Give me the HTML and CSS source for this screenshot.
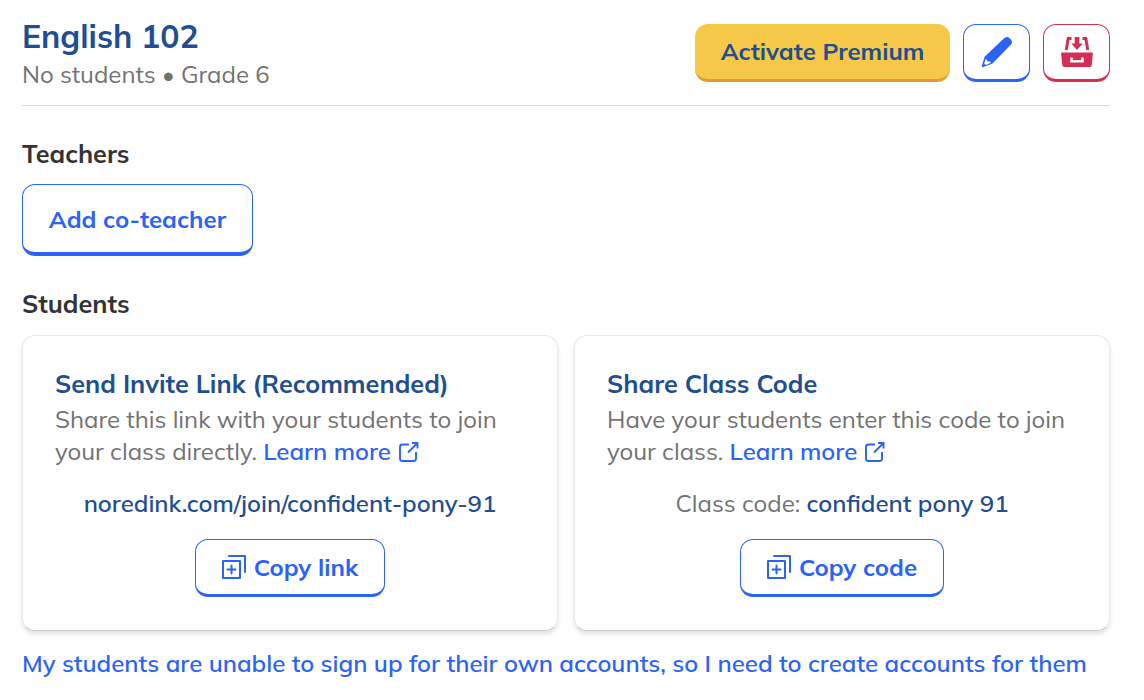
FILE: index.html
```
<!DOCTYPE html>
<html lang="en">
<head>
    <meta charset="utf-8">
    <title>English 102</title>
    <link rel="stylesheet" href="styles.css">
</head>
<body>
    <header class="class-header">
        <div>
            <h1 class="title">English 102</h1>
            <p class="subtitle">No students • Grade 6</p>
        </div>
        <div class="actions">
            <button class="btn premium">Activate Premium</button>
            <button class="btn icon-btn" aria-label="Edit class">
                <svg width="32" height="32" viewBox="0 0 32 32">
                    <path fill="currentColor" d="M23.7 1.800q2.300-1.800 4.800.4l1.300 1.300q2.200 2.500.4 4.700L11.500 27.500 1.500 31.200l-.8-.8L3.600 20.800z"/>
                    <path fill="#fff" d="M5 22.500l1.200 2.700 2.800.4 1 1.200-5.200 2.200-1.600-1.600z"/>
                </svg>
            </button>
            <button class="btn icon-btn danger" aria-label="Archive class">
                <svg width="32" height="32" viewBox="0 0 32 32">
                    <path fill="none" stroke="currentColor" stroke-width="3" d="M10.500 2.500H7.200L5.200 14M21.500 2.500h3.300L26.800 14"/>
                    <path fill="currentColor" d="M13.700 1h4.600v6.400h3.400L16 14l-5.700-6.600h3.400z"/>
                    <path fill="currentColor" fill-rule="evenodd" d="M1.200 16.500h29.600q1.200 0 1.100 1.200l-1.200 11.500q-.2 1.800-2 1.800H3.300q-1.800 0-2-1.800L.1 17.700q-.1-1.200 1.100-1.200zM9.300 21.500v5h13.400v-5h-2.500v2.400h-8.400v-2.400z"/>
                </svg>
            </button>
        </div>
    </header>

    <h2 class="section-title">Teachers</h2>
    <button class="btn large">Add co-teacher</button>

    <h2 class="section-title">Students</h2>
    <div class="cards">
        <section class="card">
            <h3 class="card-title">Send Invite Link (Recommended)</h3>
            <p class="description">Share this link with your students to join<br>your class directly. <a href="#">Learn more</a>
                <svg class="external" width="22" height="22" viewBox="0 0 22 22"><path d="M11 3.500H4.500Q2 3.500 2 6v11.500Q2 20 4.500 20H15.500Q18 20 18 17.500V11M14 2h5.500v5.500M19.500 2L10 11.500"/></svg>
            </p>
            <p class="code"><strong>noredink.com/join/confident-pony-91</strong></p>
            <button class="btn copy">
                <svg class="copy-icon" width="24" height="24" viewBox="0 0 24 24"><path d="M1 6h17v17H1zM7 1h16v16M9.500 10.500v8M5.500 14.500h8"/></svg>
                <span>Copy link</span>
            </button>
        </section>
        <section class="card">
            <h3 class="card-title">Share Class Code</h3>
            <p class="description">Have your students enter this code to join<br>your class. <a href="#">Learn more</a>
                <svg class="external" width="22" height="22" viewBox="0 0 22 22"><path d="M11 3.500H4.500Q2 3.500 2 6v11.500Q2 20 4.500 20H15.500Q18 20 18 17.500V11M14 2h5.500v5.500M19.500 2L10 11.500"/></svg>
            </p>
            <p class="code">Class code: <strong>confident pony 91</strong></p>
            <button class="btn copy">
                <svg class="copy-icon" width="24" height="24" viewBox="0 0 24 24"><path d="M1 6h17v17H1zM7 1h16v16M9.500 10.500v8M5.500 14.500h8"/></svg>
                <span>Copy code</span>
            </button>
        </section>
    </div>
    <a class="no-signup" href="#">My students are unable to sign up for their own accounts, so I need to create accounts for them</a>
</body>
</html>
```
FILE: styles.css
```
* {
    box-sizing: border-box;
}

body {
    margin: 0;
    padding: 16px 34px 0 22px;
    height: 700px;
    overflow: hidden;
    background: #fff;
    color: #333;
    font-family: Mulish, Muli, Lato, sans-serif;
    font-size: 24px;
    line-height: 32px;
}

h1, h2, h3, p {
    margin: 0;
}

a {
    color: #2b63f6;
    font-weight: 600;
    text-decoration: none;
}

.class-header {
    display: flex;
    justify-content: space-between;
    height: 90px;
    border-bottom: 1px solid #d8dadb;
}

.title {
    padding-bottom: 2px;
    color: #1f4f90;
    font-size: 32px;
    line-height: 40px;
}

.subtitle {
    color: #727272;
}

.actions {
    display: flex;
    gap: 13px;
    padding-top: 8px;
}

.btn {
    display: flex;
    align-items: center;
    justify-content: center;
    gap: 8px;
    height: 58px;
    padding: 0;
    border: 1px solid #2b63f6;
    border-bottom-width: 3px;
    border-radius: 13px;
    background: #fff;
    color: #2b63f6;
    font: 700 24px/32px Mulish, Muli, Lato, sans-serif;
    white-space: nowrap;
}

.premium {
    width: 255px;
    padding-bottom: 1px;
    border-width: 0 0 3px;
    border-color: #e79736;
    background: #f5c947;
    color: #1f4f90;
}

.icon-btn {
    width: 67px;
}

.danger {
    border-color: #d52e55;
    color: #d52e55;
}

.section-title {
    margin-top: 32px;
    font-size: 25.25px;
    line-height: 32px;
}

.large {
    width: 231px;
    height: 72px;
    margin-top: 14px;
    border-bottom-width: 4px;
}

.cards {
    display: grid;
    grid-template-columns: 1fr 1fr;
    gap: 16px;
    margin-top: 15px;
}

.card {
    height: 296px;
    padding: 32px 32px 0;
    border: 1px solid #e7e8e9;
    border-bottom-color: #cbcccc;
    border-radius: 13px;
    box-shadow: 0 3px 4px rgba(0, 0, 0, 0.12);
}

.card-title {
    color: #1f4f90;
    font-size: 25.25px;
    line-height: 32px;
}

.description {
    margin-top: 3px;
    color: #727272;
    white-space: nowrap;
}

.external {
    margin-left: 0.5px;
    vertical-align: -3px;
    fill: none;
    stroke: #2b63f6;
    stroke-width: 1.9;
}

.code {
    margin-top: 20px;
    color: #727272;
    text-align: center;
}

.code strong {
    color: #1f4f90;
    font-weight: 600;
}

.copy {
    width: 190px;
    margin: 20px auto 0;
}

.card + .card .copy {
    width: 204px;
}

.copy-icon {
    fill: none;
    stroke: currentColor;
    stroke-width: 2;
    stroke-linejoin: round;
    stroke-linecap: round;
}

.no-signup {
    display: block;
    margin-top: 16px;
    white-space: nowrap;
}
```
